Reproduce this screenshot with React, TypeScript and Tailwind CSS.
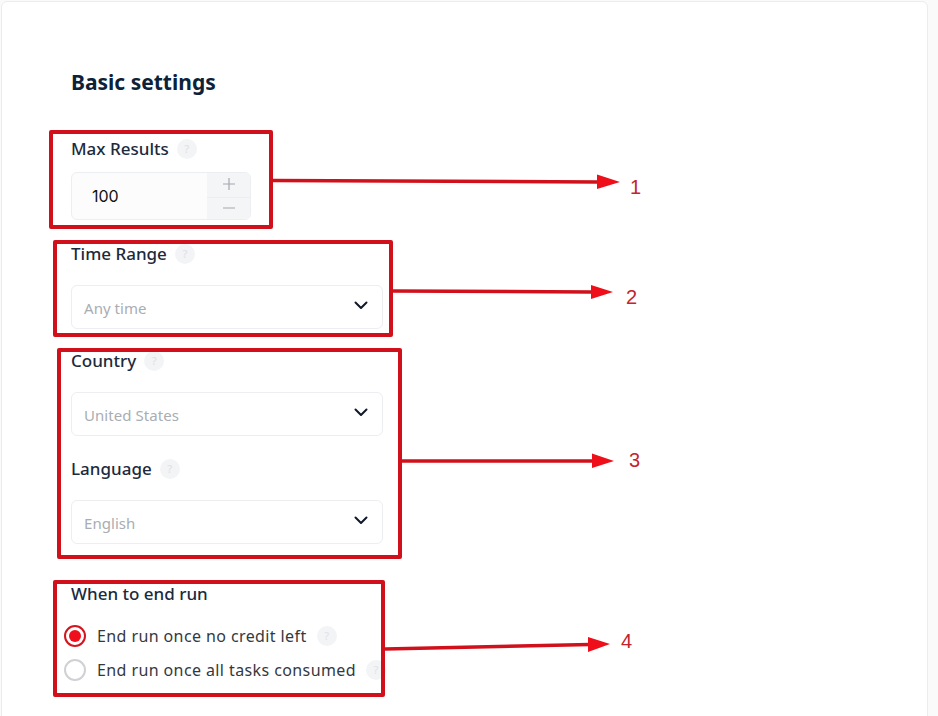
import React from "react";

const sans = "font-['Noto_Sans','Open_Sans',sans-serif]";

function Help({ className = "" }: { className?: string }) {
  return (
    <span
      className={`ml-2 inline-flex h-[20px] w-[20px] shrink-0 items-center justify-center rounded-full bg-[#f3f4f6] text-[11px] text-[#e0e2e5] ${className}`}
    >
      ?
    </span>
  );
}

function Label({ text, help = true }: { text: string; help?: boolean }) {
  return (
    <div className="flex h-[24px] items-center text-[17px] font-medium leading-[24px] text-[#1b2a3d]">
      {text}
      {help && <Help />}
    </div>
  );
}

function Chevron() {
  return (
    <svg width="14" height="9" viewBox="0 0 14 9" fill="none" className="shrink-0">
      <path d="M1.5 1.5 7 7l5.5-5.5" stroke="#111827" strokeWidth="2" strokeLinecap="round" strokeLinejoin="round" />
    </svg>
  );
}

function Select({ value, className = "" }: { value: string; className?: string }) {
  return (
    <div
      className={`flex h-[44px] w-[312px] items-center justify-between rounded-md border border-[#eceef1] bg-white pl-[12px] pr-[14px] text-[15px] tracking-[0.05px] text-[#a9adb3] ${className}`}
    >
      <span className="relative top-[1px]">{value}</span>
      <span className="relative -top-[2px]">
        <Chevron />
      </span>
    </div>
  );
}

function Radio({ checked }: { checked?: boolean }) {
  return checked ? (
    <span className="flex h-[22px] w-[22px] shrink-0 items-center justify-center rounded-full border-[2px] border-[#d4151f] bg-white">
      <span className="h-[12px] w-[12px] rounded-full bg-[#f0101c]" />
    </span>
  ) : (
    <span className="h-[22px] w-[22px] shrink-0 rounded-full border-[2px] border-[#cfd1d4] bg-white" />
  );
}

function RedBox({ className }: { className: string }) {
  return <div className={`pointer-events-none absolute rounded-[2px] border-[4px] border-[#d0101a] ${className}`} />;
}

function Num({ n, className }: { n: string; className: string }) {
  return (
    <span className={`absolute font-['Liberation_Sans',sans-serif] text-[20px] leading-[24px] text-[#c4242c] ${className}`}>
      {n}
    </span>
  );
}

export default function App() {
  return (
    <div className={`relative h-[716px] w-[938px] overflow-hidden bg-[#fafafa] ${sans}`}>
      <div className="ml-[1px] mt-[1px] h-[760px] w-[927px] rounded-md border border-[#ececec] bg-white pl-[69px] pt-[62px]">
        <h2 className="text-[21px] font-bold leading-[36px] text-[#0d2238]">Basic settings</h2>

        <div className="mt-[37px]">
          <Label text="Max Results" />
          <div className="mt-[11px] flex h-[48px] w-[180px] overflow-hidden rounded-md border border-[#eceef1] bg-[#fcfcfd]">
            <div className="flex flex-1 items-center pl-[20px] font-['Inter',sans-serif] text-[16px] text-[#111111]">100</div>
            <div className="flex w-[43px] flex-col bg-[#f4f5f7] text-[#9a9ea5]">
              <div className="flex h-[25px] items-center justify-center border-b border-[#eceef1] pb-[2px]">
                <svg width="14" height="14" viewBox="0 0 14 14" fill="none">
                  <path d="M7 1v12M1 7h12" stroke="#a3a7ad" strokeWidth="1.2" />
                </svg>
              </div>
              <div className="flex flex-1 items-center justify-center pb-[2px]">
                <svg width="14" height="14" viewBox="0 0 14 14" fill="none">
                  <path d="M1 7h12" stroke="#a3a7ad" strokeWidth="1.2" />
                </svg>
              </div>
            </div>
          </div>
        </div>

        <div className="mt-[22px]">
          <Label text="Time Range" />
          <Select value="Any time" className="mt-[19px]" />
        </div>

        <div className="mt-[20px]">
          <Label text="Country" />
          <Select value="United States" className="mt-[19px]" />
        </div>

        <div className="mt-[21px]">
          <Label text="Language" />
          <Select value="English" className="mt-[19px]" />
        </div>

        <div className="mt-[38px]">
          <Label text="When to end run" help={false} />
          <div className="-ml-[7px] mt-[13px] flex h-[34px] items-center text-[16px] text-[#33393f]">
            <Radio checked />
            <span className="ml-[11px] tracking-[0.4px]">End run once no credit left</span>
            <Help className="ml-[10px]" />
          </div>
          <div className="-ml-[7px] flex h-[34px] items-center text-[16px] text-[#33393f]">
            <Radio />
            <span className="ml-[11px] tracking-[0.4px]">End run once all tasks consumed</span>
            <Help className="ml-[10px]" />
          </div>
        </div>
      </div>

      <RedBox className="left-[49px] top-[130px] h-[99px] w-[224px]" />
      <RedBox className="left-[53px] top-[240px] h-[97px] w-[340px]" />
      <RedBox className="left-[57px] top-[348px] h-[211px] w-[345px]" />
      <RedBox className="left-[53px] top-[580px] h-[117px] w-[332px]" />

      <svg className="pointer-events-none absolute left-0 top-0" width="938" height="716" viewBox="0 0 938 716" fill="none">
        <path d="M272 180.500 598 182" stroke="#d0101a" strokeWidth="3.500" />
        <path d="M597 174.500 620 182 597 189z" fill="#ee0f1a" />
        <path d="M392 291 592 292" stroke="#d0101a" strokeWidth="3.500" />
        <path d="M591 285 613 292 591 299z" fill="#ee0f1a" />
        <path d="M401 461 594 461" stroke="#d0101a" strokeWidth="3.500" />
        <path d="M592 453.500 614 461 592 468z" fill="#ee0f1a" />
        <path d="M385 649 590 644.500" stroke="#d0101a" strokeWidth="3.500" />
        <path d="M588 637 610 644 588 652z" fill="#ee0f1a" />
      </svg>

      <Num n="1" className="left-[630px] top-[175px]" />
      <Num n="2" className="left-[626px] top-[285px]" />
      <Num n="3" className="left-[629px] top-[448px]" />
      <Num n="4" className="left-[621px] top-[629px]" />
    </div>
  );
}
